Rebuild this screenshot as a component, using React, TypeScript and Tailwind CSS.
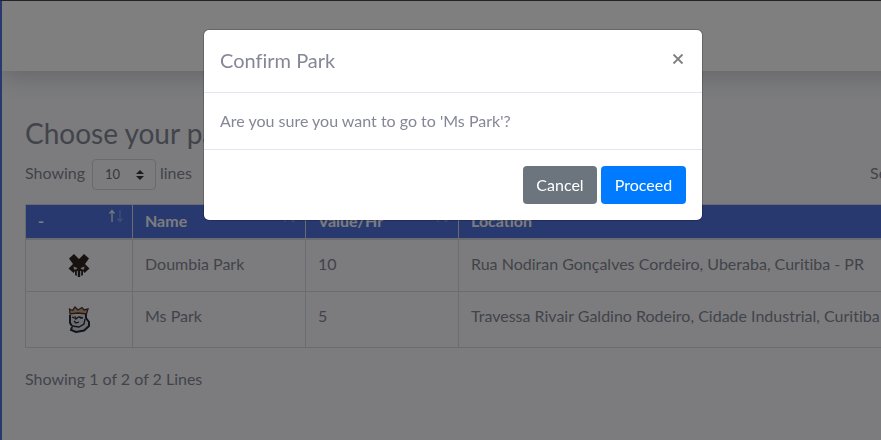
import React from 'react';

function SortArrows({ active = false }: { active?: boolean }) {
  return (
    <svg width="16" height="14" viewBox="0 0 16 14" fill="none" stroke="white" strokeWidth="1.3" className="shrink-0" aria-hidden="true">
      <path d="M4 13V2M1.5 4.5L4 1.5L6.5 4.5" opacity={active ? 0.9 : 0.3} />
      <path d="M12 1V12M9.5 9.5L12 12.5L14.5 9.5" opacity="0.3" />
    </svg>
  );
}

function SkullIcon() {
  return (
    <svg width="24" height="24" viewBox="0 0 24 24" className="mx-auto block" aria-hidden="true">
      <path fill="#2e2421" d="M7 1L12 6L17 1L22 5.500L18 11L22.500 15.500L17.500 20L16 18V22L14.200 23V18H13.200V24H10.800V18H9.800V23L8 22V18L6.500 20L1.500 15.500L6 11L2 5.500Z" />
      <path fill="#d8d8da" d="M6.500 13.500L10.500 15L9 16.500H7ZM17.500 13.500L13.500 15L15 16.500H17Z" />
    </svg>
  );
}

function KingIcon() {
  return (
    <svg width="24" height="28" viewBox="0 0 24 28" className="mx-auto block" aria-hidden="true">
      <path d="M3.500 10L3 19L5 21L4 25L9 27L17 25.500L22 21L22 17L18.500 14L19 9Z" fill="#dcdde2" />
      <path d="M3 10V18L5 21M19 9L19 13L22 17L22 21L17 25.500L9 27L4 25L5 22" fill="none" stroke="#23263a" strokeWidth="2" />
      <path d="M3 9L2.500 4L5.500 5.500L8 2L11 5L15 2.500L17 5L21 4L19.500 9L11 8Z" fill="#c7a183" stroke="#4c352e" strokeWidth="1.300" />
      <path d="M5 12L9 13.500L12 12L16 13M5 21L12 22L17 19L18 14M7 16L9 18L12 17" fill="none" stroke="#23263a" strokeWidth="1.300" />
      <path d="M8 11L9 15M13 12L14 14" stroke="#4c352e" strokeWidth="1" />
    </svg>
  );
}

const columns = ['-', 'Name', 'Value/Hr', 'Location'];
const parks = [
  { icon: <SkullIcon />, name: 'Doumbia Park', value: 10, location: 'Rua Nodiran Gonçalves Cordeiro, Uberaba, Curitiba - PR' },
  { icon: <KingIcon />, name: 'Ms Park', value: 5, location: 'Travessa Rivair Galdino Rodeiro, Cidade Industrial, Curitiba - PR' },
];

function ParkTable() {
  return (
    <table className="w-full table-fixed border-collapse border border-[#d6d9e3] text-left">
      <colgroup>
        <col className="w-[107px]" />
        <col className="w-[173px]" />
        <col className="w-[153px]" />
        <col />
      </colgroup>
      <thead className="bg-[#4e73df] text-[#f8f9fc]">
        <tr>
          {columns.map((name, i) => (
            <th key={name} className="h-[34px] border-x border-b-2 border-[#d6d9e3] py-0 pl-3 pr-2 font-bold">
              <div className="flex items-start justify-between">
                <span className="leading-6">{name}</span>
                <SortArrows active={i === 0} />
              </div>
            </th>
          ))}
        </tr>
      </thead>
      <tbody>
        {parks.map((park) => (
          <tr key={park.name} className="border-b border-[#d6d9e3] align-top">
            <td className="border-x border-[#d6d9e3] px-3 pb-[14px] pt-[13px]">{park.icon}</td>
            <td className="border-x border-[#d6d9e3] p-3">{park.name}</td>
            <td className="border-x border-[#d6d9e3] p-3">{park.value}</td>
            <td className="whitespace-nowrap border-x border-[#d6d9e3] p-3">{park.location}</td>
          </tr>
        ))}
      </tbody>
    </table>
  );
}

function ConfirmDialog() {
  return (
    <div className="fixed inset-0 bg-black/50 pl-[25px] pt-[29px]">
      <div role="dialog" aria-modal="true" aria-labelledby="confirm-title" className="mx-auto max-w-[500px] rounded-md border border-black/20 bg-white bg-clip-padding">
        <header className="flex items-start justify-between border-b border-[#e3e6f0] p-4">
          <h5 id="confirm-title" className="text-[20px] leading-[28px]">Confirm Park</h5>
          <button type="button" aria-label="Close" className="mb-1 flex h-[26px] w-4 items-center justify-center text-[#808080]">
            <svg width="12" height="12" viewBox="0 0 12 12" fill="none" stroke="currentColor" strokeWidth="1.800" aria-hidden="true">
              <path d="M1.500 1.500L10.500 10.500M10.500 1.500L1.500 10.500" />
            </svg>
          </button>
        </header>
        <p className="p-4">Are you sure you want to go to 'Ms Park'?</p>
        <footer className="flex justify-end gap-1 border-t border-[#e3e6f0] p-4 text-white">
          <button type="button" className="h-[38px] w-[74px] rounded bg-[#6c757d]">Cancel</button>
          <button type="button" className="h-[38px] w-[85px] rounded bg-[#007bff]">Proceed</button>
        </footer>
      </div>
    </div>
  );
}

export default function App() {
  return (
    <div className="flex h-screen overflow-hidden border-t border-[#4a4650] bg-[#f8f9fc] font-['Lato',sans-serif] text-base text-[#858796] [font-variant-ligatures:none]">
      <aside className="w-[2px] shrink-0 bg-[#4e73df]" />
      <div className="min-w-0 flex-1 overflow-hidden">
        <nav className="h-[70px] min-w-[1146px] bg-white shadow-[0_2px_28px_rgba(58,59,69,0.3)]" />
        <main className="min-w-[1146px] px-[23px] pt-[45px]">
          <h3 className="mb-[9px] text-[28px] leading-[34px]">Choose your park</h3>
          <div className="mb-[14px] flex items-center justify-between">
            <label className="flex h-[31px] items-center gap-1">
              <span className="-mt-1 w-[63px]">Showing</span>
              <span className="relative">
                <select defaultValue="10" className="h-[31px] w-16 appearance-none rounded border border-[#d1d3e2] bg-transparent pl-3 text-[13px] text-[#6e707e]">
                  <option>10</option>
                  <option>25</option>
                  <option>50</option>
                </select>
                <svg width="8" height="10" viewBox="0 0 8 10" fill="#343a40" className="pointer-events-none absolute right-3 top-[11px]" aria-hidden="true">
                  <path d="M4 0L8 4H0ZM4 10L0 6H8Z" />
                </svg>
              </span>
              <span className="-mt-1">lines</span>
            </label>
            <label className="-mt-1 flex w-[255px] items-center gap-2">
              Search:
              <input type="search" className="h-[31px] min-w-0 flex-1 rounded border border-[#d1d3e2] bg-white px-2 text-sm" />
            </label>
          </div>
          <ParkTable />
          <p className="mt-[19px]">Showing 1 of 2 of 2 Lines</p>
        </main>
      </div>
      <ConfirmDialog />
    </div>
  );
}
